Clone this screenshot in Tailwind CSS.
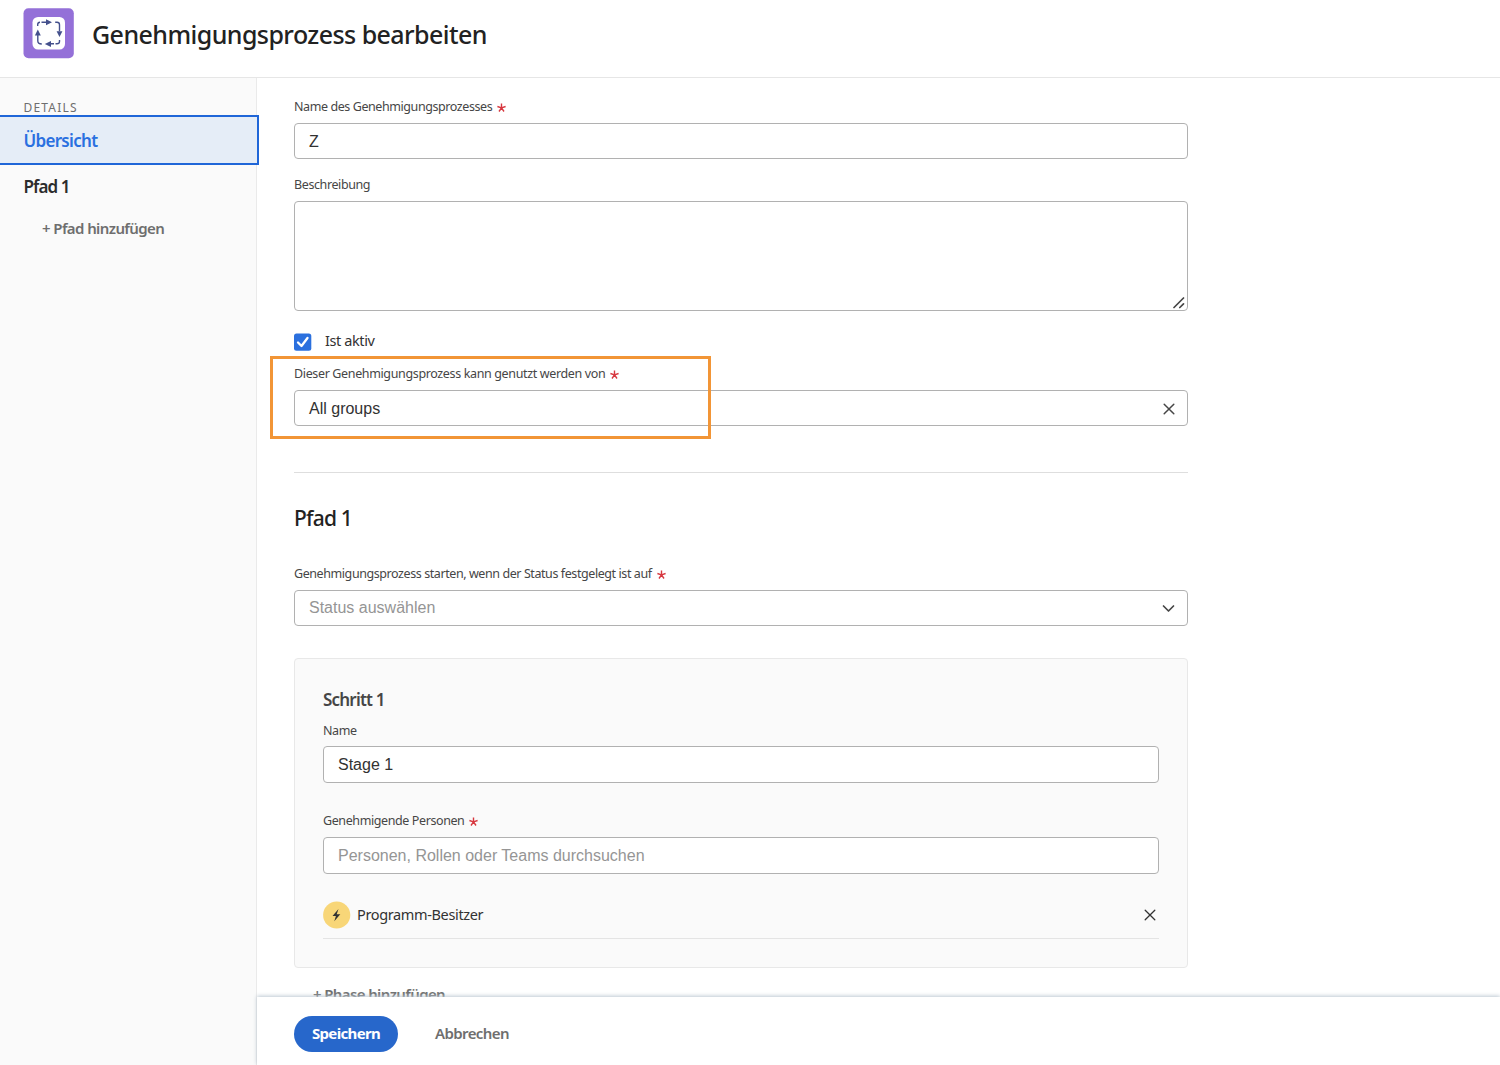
<!DOCTYPE html>
<html lang="de">
<head>
<meta charset="utf-8">
<title>Genehmigungsprozess bearbeiten</title>
<script src="https://cdn.jsdelivr.net/npm/@tailwindcss/browser@4"></script>
</head>
<body class="relative flex h-[1065px] w-[1500px] flex-col overflow-hidden bg-white font-['Noto_Sans',sans-serif] text-[#323232] whitespace-nowrap">
  <header class="flex h-[78px] shrink-0 items-start border-b border-[#e6e6e6] pl-[23px] pt-2">
    <svg class="h-[51px] w-[51px] shrink-0" viewBox="0 0 51 51" fill="none">
      <rect x=".5" y=".3" width="50.3" height="50" rx="5" fill="#9470d8"/>
      <rect x="9.5" y="9" width="32.5" height="32.5" rx="5.5" fill="#fff"/>
      <g stroke="#44508c" stroke-width="1.4">
        <path d="M14.700 18v-1.500q0-2.200 2.300-2.200M18.500 14.300h5M32.200 14.300h1.800q2.500 0 2.500 2.500v6.500M36.500 32v1.500q0 2.300-2.500 2.300h-1.500M31 35.800h-5M18.800 36q-4-.1-4-3v-6"/>
      </g>
      <path d="M23 11.300l6 3-6 3zM33.600 23.200h5.800l-2.900 5.800zM28 32.900v6l-6.200-3zM11.900 27.600l2.900-6.100 3 6.100z" fill="#44508c"/>
    </svg>
    <h1 class="ml-[18px] mt-[6px] text-[25px] leading-10 font-medium tracking-[-0.56px] text-[#222]">Genehmigungsprozess bearbeiten</h1>
  </header>

  <div class="flex min-h-0 flex-1">
    <nav class="w-[257px] shrink-0 border-r border-[#eaeaea] bg-[#fafafa] pt-[20px]">
      <div class="h-[17px] pl-[23.500px] text-[12px] leading-[20px] tracking-[1.2px] text-[#6e6e6e]">DETAILS</div>
      <div class="flex h-[50px] w-[258.500px] items-center border-2 border-l-0 border-[#1f66d8] bg-[#e5edf7] pl-[23.500px] pt-px text-[17px] font-semibold tracking-[-0.7px] text-[#2a70e0]">Übersicht</div>
      <div class="flex h-[43px] items-center pl-[23.500px] text-[17px] font-semibold tracking-[-0.9px] text-[#2c2c2c]">Pfad 1</div>
      <div class="flex h-[41px] items-center pl-[42px] text-[15px] font-semibold tracking-[-0.6px] text-[#6e6e6e]">+ Pfad hinzufügen</div>
    </nav>

    <div class="flex min-w-0 flex-1 flex-col">
      <main class="min-h-0 flex-1 overflow-hidden pl-[37px] pt-[19px]">
        <div class="w-[894px]">
          <div class="flex h-[26px] text-[12.500px] leading-5 tracking-[-0.42px] text-[#464646]">Name des Genehmigungsprozesses<svg class="ml-[5px] mt-[6px] h-[9px] w-[9px]" viewBox="0 0 9 9" stroke="#d7373f" stroke-width="1.400"><path d="M4.500 4.800V.5M4.500 4.800L.4 3.500M4.500 4.800l4.100-1.300M4.500 4.800L2 8.500M4.500 4.800L7 8.500"/></svg></div>
          <div class="flex h-[36px] items-center rounded-[4px] border border-[#b1b1b1] pl-[14px] pt-px font-['Liberation_Sans',Arial,sans-serif] text-[16px]">Z</div>
          <div class="mt-4 h-[26px] text-[12.500px] leading-5 tracking-[-0.4px] text-[#464646]">Beschreibung</div>
          <div class="flex h-[110px] items-end justify-end rounded-[4px] border border-[#b1b1b1] pr-[2px] pb-[1px]">
            <svg class="h-[12px] w-[12px]" viewBox="0 0 12 12" stroke="#464646" stroke-width="1.700" stroke-linecap="round"><path d="M1 10.500L10.500 1M6.800 10.500l3.700-3.700"/></svg>
          </div>
          <div class="mt-[19px] flex h-[22px] items-center">
            <svg class="mt-[2px] h-[18px] w-[18px]" viewBox="0 0 18 18" fill="none"><rect y=".5" width="17.300" height="17.300" rx="2.500" fill="#2b70de"/><path d="M4 9.500l3.500 3.500L13.500 5" stroke="#fff" stroke-width="2.300" stroke-linecap="round" stroke-linejoin="round"/></svg>
            <span class="ml-[13px] text-[14.500px] tracking-[-0.4px]">Ist aktiv</span>
          </div>
          <div class="mt-[12px] flex h-[26px] text-[12.500px] leading-5 tracking-[-0.36px] text-[#464646]">Dieser Genehmigungsprozess kann genutzt werden von<svg class="ml-[5px] mt-[6px] h-[9px] w-[9px]" viewBox="0 0 9 9" stroke="#d7373f" stroke-width="1.400"><path d="M4.500 4.800V.5M4.500 4.800L.4 3.500M4.500 4.800l4.100-1.300M4.500 4.800L2 8.500M4.500 4.800L7 8.500"/></svg></div>
          <div class="flex h-[36px] items-center justify-between rounded-[4px] border border-[#b1b1b1] pl-[14px] pr-[12px] pt-px font-['Liberation_Sans',Arial,sans-serif] text-[16px]">All groups
            <svg class="h-[12px] w-[12px]" viewBox="0 0 12 12" stroke="#464646" stroke-width="1.500" stroke-linecap="round"><path d="M1.200 1.200l9.600 9.600M10.800 1.200L1.200 10.800"/></svg>
          </div>
          <div class="mt-[46px] h-px bg-[#dedede]"></div>
          <h2 class="mt-[29px] h-[32px] text-[21px] leading-8 font-medium tracking-[-0.8px] text-[#222]">Pfad 1</h2>
          <div class="mt-[30px] flex h-[26px] text-[12.500px] leading-5 tracking-[-0.42px] text-[#464646]">Genehmigungsprozess starten, wenn der Status festgelegt ist auf<svg class="ml-[5px] mt-[6px] h-[9px] w-[9px]" viewBox="0 0 9 9" stroke="#d7373f" stroke-width="1.400"><path d="M4.500 4.800V.5M4.500 4.800L.4 3.500M4.500 4.800l4.100-1.300M4.500 4.800L2 8.500M4.500 4.800L7 8.500"/></svg></div>
          <div class="flex h-[36px] items-center justify-between rounded-[4px] border border-[#b1b1b1] pl-[14px] pr-[12px] font-['Liberation_Sans',Arial,sans-serif] text-[16px] text-[#959595]">Status auswählen
            <svg class="h-[12px] w-[13px]" viewBox="0 0 13 12" fill="none" stroke="#464646" stroke-width="1.700" stroke-linecap="round" stroke-linejoin="round"><path d="M1.500 4l5 5 5-5"/></svg>
          </div>
          <section class="mt-[32px] h-[310px] rounded-[4px] border border-[#e8e8e8] bg-[#fafafa] px-[28px] pt-[29px]">
            <h3 class="h-[33px] text-[17px] leading-6 font-semibold tracking-[-0.8px] text-[#464646]">Schritt 1</h3>
            <div class="h-[25px] text-[12.500px] leading-5 tracking-[-0.4px] text-[#464646]">Name</div>
            <div class="flex h-[37px] items-center rounded-[4px] border border-[#b1b1b1] bg-white pl-[14px] font-['Liberation_Sans',Arial,sans-serif] text-[16px]">Stage 1</div>
            <div class="mt-7 flex h-[26px] text-[12.500px] leading-5 tracking-[-0.4px] text-[#464646]">Genehmigende Personen<svg class="ml-[5px] mt-[6px] h-[9px] w-[9px]" viewBox="0 0 9 9" stroke="#d7373f" stroke-width="1.400"><path d="M4.500 4.800V.5M4.500 4.800L.4 3.500M4.500 4.800l4.100-1.300M4.500 4.800L2 8.500M4.500 4.800L7 8.500"/></svg></div>
            <div class="flex h-[37px] items-center rounded-[4px] border border-[#b1b1b1] bg-white pl-[14px] font-['Liberation_Sans',Arial,sans-serif] text-[16px] text-[#959595]">Personen, Rollen oder Teams durchsuchen</div>
            <div class="mt-[18px] flex h-[47px] items-center border-b border-[#e4e4e4] pr-[3px]">
              <svg class="h-[28px] w-[28px]" viewBox="0 0 28 28"><circle cx="13.700" cy="14" r="13.600" fill="#f8d678"/><path d="M15.500 8l-6 7h3.400l-1.600 5.300 6-7h-3.600z" fill="#323232"/></svg>
              <span class="ml-[6px] flex-1 text-[14.500px] tracking-[-0.36px]">Programm-Besitzer</span>
              <svg class="h-[12px] w-[12px]" viewBox="0 0 12 12" stroke="#323232" stroke-width="1.300" stroke-linecap="round"><path d="M1.200 1.200l9.600 9.600M10.800 1.200L1.200 10.800"/></svg>
            </div>
          </section>
          <div class="mt-[14px] pl-[19px] text-[15px] leading-6 font-semibold tracking-[-0.62px] text-[#6e6e6e]">+ Phase hinzufügen</div>
        </div>
      </main>
      <footer class="relative flex h-[68px] shrink-0 items-start bg-white pl-[37px] pt-[19px] shadow-[0_-1px_4px_0_#bcc8d2]">
        <div class="flex h-[36px] w-[104px] items-center justify-center rounded-full bg-[#2767cb] pb-[2px] text-[15px] font-bold tracking-[-0.65px] text-white">Speichern</div>
        <div class="ml-[37px] flex h-[36px] items-center pb-[2px] text-[15px] font-semibold tracking-[-0.6px] text-[#6e6e6e]">Abbrechen</div>
      </footer>
    </div>
  </div>
  <div class="absolute left-[270px] top-[356px] h-[83px] w-[441px] border-3 border-[#f29536]"></div>
</body>
</html>
